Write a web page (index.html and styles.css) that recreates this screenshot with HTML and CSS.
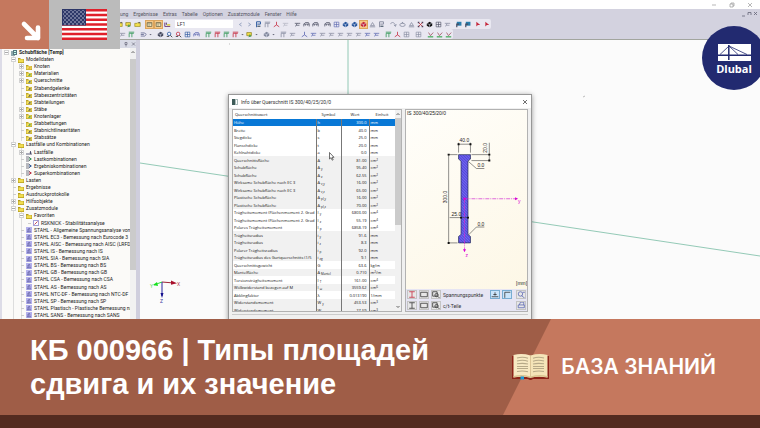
FILE: index.html
```html
<!DOCTYPE html>
<html lang="ru">
<head>
<meta charset="utf-8">
<meta name="viewport" content="width=device-width, initial-scale=1">
<title>КБ 000966 | Типы площадей сдвига и их значение</title>
<link rel="stylesheet" href="styles.css">
</head>
<body>
<svg class="defs" aria-hidden="true">
  <symbol id="folder" viewBox="0 0 6 6"><path d="M0 1h2l1 1h3v4H0z" fill="#b39b1e"/><path d="M.5 2.3h5v3h-5z" fill="#f1dc4f"/></symbol>
  <symbol id="item" viewBox="0 0 6 6"><path d="M0 1h2l1 1h3v4H0z" fill="#bda52a"/><path d="M.5 2.3h5v3h-5z" fill="#f3df5c"/><path d="M2 5l2-2.4.8 1.6z" fill="currentColor"/></symbol>
  <symbol id="combo" viewBox="0 0 6 6"><path d="M0 1h3l2 2-2 2H0M0 3h3" fill="none" stroke="#556" stroke-width=".8"/><path d="M3.500 1.500L6 3 3.500 4.500z" fill="currentColor"/></symbol>
  <symbol id="load" viewBox="0 0 6 6"><path d="M0 5h6M4.500 2v2.500" stroke="#335" stroke-width=".8"/><path d="M3.500 3.500h2l-1 1.500z" fill="#335"/></symbol>
  <symbol id="model" viewBox="0 0 6 6"><path d="M0 1h4v5H0z" fill="#8fa9ad"/><path d="M2 0h4v5H2z" fill="#55777e"/><path d="M3 1h2v1H3zM3 3h2v1H3z" fill="#cfe"/></symbol>
  <symbol id="steel" viewBox="0 0 6 6"><path d="M0 0h6v6H0z" fill="#b3b0ec"/><path d="M1 4.800h4M2 4.500V2l2-.5M2.500 3h2" stroke="#55539a" stroke-width=".7" fill="none"/></symbol>
  <symbol id="buckle" viewBox="0 0 6 6"><path d="M.4.4h5.200v5.200H.4z" fill="#fff" stroke="#7d78c9" stroke-width=".8"/><path d="M1.500 4.500l3-3" stroke="#c33a4a" stroke-width=".9"/></symbol>

  <symbol id="t-open" viewBox="0 0 9 9"><path d="M1 3h3l1-1h3v5H1z" fill="#f3e04d" stroke="#92821e" stroke-width=".8"/><path d="M5 3l2-2 1 2" fill="#557" /></symbol>
  <symbol id="t-screen" viewBox="0 0 9 9"><path d="M1 2h6v4H1z" fill="#f0dd49" stroke="#857717" stroke-width=".8"/><path d="M5 4l2 3-4 1z" fill="#4d9b52"/></symbol>
  <symbol id="t-table" viewBox="0 0 9 9"><path d="M1.500 2h6v5h-6z" fill="#f4e7bd" stroke="#6d6648"/><path d="M1.500 3.500h6M4 3.500V7" stroke="#6d6648" stroke-width=".6"/></symbol>
  <symbol id="t-load" viewBox="0 0 9 9"><path d="M1 2v5M1 7h7M3 2v2" stroke="#405" stroke-width=".9"/><path d="M4 4h4v2H4z" fill="#d9ca42"/><path d="M2 3.500h2L3 5z" fill="#335"/></symbol>
  <symbol id="t-prev" viewBox="0 0 9 9"><path d="M6 2.500L3 4.500l3 2" fill="none" stroke="#8493b4"/></symbol>
  <symbol id="t-next" viewBox="0 0 9 9"><path d="M3 2.500l3 2-3 2" fill="none" stroke="#8493b4"/></symbol>
  <symbol id="t-flag" viewBox="0 0 9 9"><path d="M2 8V1h5v3H3" fill="none" stroke="currentColor" stroke-width="1.200"/><path d="M3 6h4v1.500H3z" fill="#456"/></symbol>
  <symbol id="t-beam" viewBox="0 0 9 9"><path d="M1 7V4h7v3M1 4l2-2h4l1 2M3 4v2M6 4v2" fill="none" stroke="currentColor" stroke-width=".9"/></symbol>
  <symbol id="t-frame" viewBox="0 0 9 9"><path d="M1.500 8V3h6M5 3v5M1 1.500h7" fill="none" stroke="currentColor"/></symbol>
  <symbol id="t-cube" viewBox="0 0 9 9"><path d="M1 3.500L4.500 1 8 3v3L4.500 8 1 6z" fill="currentColor"/><path d="M1.500 3.500l3 1 3-1.500M4.500 4.500V8" stroke="#dfe5f5" stroke-width=".7" fill="none"/></symbol>
  <symbol id="t-zoom" viewBox="0 0 9 9"><circle cx="4" cy="3.700" r="2.200" fill="#e9efff" stroke="currentColor"/><path d="M5.500 5.500L8 8M1 7h3" stroke="#444" stroke-width="1.200"/></symbol>
  <symbol id="t-cross" viewBox="0 0 9 9"><path d="M2 2l5 5M7 2L2 7" stroke="#c52c34"/><path d="M1 1h2v2H1zM6 1h2v2H6zM1 6h2v2H1zM6 6h2v2H6z" fill="#514058"/></symbol>
  <symbol id="t-turn" viewBox="0 0 9 9"><path d="M1 4c0-3 5-3 6 2M5 5l2 2 1-3" fill="none" stroke="currentColor"/></symbol>
  <symbol id="t-loop" viewBox="0 0 9 9"><ellipse cx="4.500" cy="5" rx="3.500" ry="2" fill="none" stroke="currentColor"/><path d="M3 3l1.500-2L6 3z" fill="currentColor"/></symbol>
  <symbol id="t-support" viewBox="0 0 9 9"><path d="M4.500 2L7 6H2zM1 7.500h7" fill="none" stroke="currentColor"/></symbol>
  <symbol id="t-axis" viewBox="0 0 9 9"><path d="M4.500 1v4L1 7.500M4.500 5L8 7.500" fill="none" stroke="currentColor"/></symbol>
  <symbol id="t-dim" viewBox="0 0 9 9"><path d="M1 3h7M3 5.500h4M2 7l2-4" fill="none" stroke="currentColor" stroke-width=".9"/></symbol>
  <symbol id="t-arrow" viewBox="0 0 9 9"><path d="M3 1v6l2-2h3z" fill="currentColor"/></symbol>
  <symbol id="t-diagram" viewBox="0 0 9 9"><path d="M1 7.500h7" stroke="#38a850" stroke-width="1.500"/><path d="M2 2l2.500 4L8 2" fill="none" stroke="#a05060"/></symbol>
  <symbol id="t-grid" viewBox="0 0 9 9"><path d="M1.500 1.500h6v6h-6zM1.500 4.500h6M4.500 1.500v6" fill="none" stroke="currentColor" stroke-width=".8"/></symbol>
  <symbol id="t-member" viewBox="0 0 9 9"><path d="M1 2.500h5L8 4.500 6 6.500H1M1 4.500h4" fill="none" stroke="#5c608b"/></symbol>
  <symbol id="t-mark" viewBox="0 0 9 9"><path d="M1 1h6v5H1z" fill="#297dac"/><path d="M1 8V4h3" fill="none" stroke="currentColor" stroke-width="1.500"/></symbol>
  <symbol id="t-down" viewBox="0 0 5 9"><path d="M1 4h3L2.500 5.500z" fill="#667"/></symbol>
</svg>

<main class="app">
  <div class="titlebar">
    <button aria-label="Minimieren"><svg viewBox="0 0 6 6"><path d="M1 3h4"/></svg></button>
    <button aria-label="Verkleinern"><svg viewBox="0 0 6 6"><path d="M1 2h3v3H1zM2 2V1h3v3H4"/></svg></button>
    <button aria-label="Schließen"><svg viewBox="0 0 6 6"><path d="M1 1l4 4M5 1L1 5"/></svg></button>
  </div>
  <header class="ribbon">
    <nav class="menu">
      <a href="#">ung</a><a href="#">Ergebnisse</a><a href="#">Extras</a><a href="#">Tabelle</a><a href="#">Optionen</a><a href="#">Zusatzmodule</a><a href="#">Fenster</a><a href="#">Hilfe</a>
      <span class="mdi"><svg viewBox="0 0 18 6"><path d="M2 5h3M8 4V1.500h3V4M14 1l3 3M17 1l-3 3"/></svg></span>
    </nav>
    <div class="toolbar first">
      <div class="group"><button aria-label="Öffnen"><svg><use href="#t-open"/></svg></button><button aria-label="Ansicht"><svg><use href="#t-screen"/></svg></button><button aria-label="Ordner"><svg><use href="#t-open"/></svg></button></div>
      <div class="group"><button class="on" aria-label="Navigator"><svg><use href="#t-table"/></svg></button><button class="on" aria-label="Tabelle"><svg><use href="#t-table"/></svg></button><button aria-label="Lastfall"><svg><use href="#t-load"/></svg></button></div>
      <select aria-label="Lastfall wählen"><option>LF1</option></select>
      <div class="group"><button aria-label="Zurück"><svg><use href="#t-prev"/></svg></button><button aria-label="Weiter"><svg><use href="#t-next"/></svg></button><button class="blue" aria-label="Lasten"><svg><use href="#t-flag"/></svg></button><button class="gray" aria-label="Werte"><svg><use href="#t-frame"/></svg></button><button class="red" aria-label="Ergebnis"><svg><use href="#t-axis"/></svg></button><button class="pale" aria-label="Maße"><svg><use href="#t-dim"/></svg></button></div>
      <div class="group"><button class="dark" aria-label="Rechnen"><svg><use href="#t-dim"/></svg></button><button class="dark" aria-label="Träger"><svg><use href="#t-beam"/></svg></button><button class="dark" aria-label="Stab"><svg><use href="#t-beam"/></svg></button></div>
      <div class="group"><button class="dark" aria-label="Drucken"><svg><use href="#t-beam"/></svg></button><button class="violet" aria-label="Raster"><svg><use href="#t-grid"/></svg></button><button class="blue" aria-label="Körper"><svg><use href="#t-cube"/></svg></button><button class="blue" aria-label="Fläche"><svg><use href="#t-cube"/></svg></button><button class="red on" aria-label="Rendern"><svg><use href="#t-cube"/></svg></button><button class="gray" aria-label="Lager"><svg><use href="#t-support"/></svg></button><button class="gray" aria-label="Fahne"><svg><use href="#t-flag"/></svg></button></div>
      <div class="group"><button class="gray" aria-label="Drehen"><svg><use href="#t-turn"/></svg></button><button class="gray" aria-label="Rotieren"><svg><use href="#t-loop"/></svg></button><button class="gray" aria-label="Spiegeln"><svg><use href="#t-support"/></svg></button><button aria-label="Löschen"><svg><use href="#t-cross"/></svg></button><button class="black" aria-label="Info"><svg><use href="#t-cube"/></svg></button><button class="dark" aria-label="Auswahl"><svg><use href="#t-grid"/></svg></button><button class="gray" aria-label="Filter"><svg><use href="#t-dim"/></svg></button></div>
      <div class="group"><button class="dark" aria-label="Fenster"><svg><use href="#t-mark"/></svg></button><button class="dark" aria-label="Bild"><svg><use href="#t-mark"/></svg></button><button class="red" aria-label="Markieren"><svg><use href="#t-arrow"/></svg></button><button class="red" aria-label="Pfeil"><svg><use href="#t-arrow"/></svg></button></div>
    </div>
    <div class="toolbar second">
      <div class="group"><button class="gray" aria-label="Linie"><svg><use href="#t-dim"/></svg></button><button class="green" aria-label="Knoten"><svg><use href="#t-frame"/></svg></button></div>
      <div class="group"><button aria-label="Stabtyp"><svg><use href="#t-member"/></svg></button><button class="drop" aria-label="Mehr Stäbe"><svg><use href="#t-down"/></svg></button></div>
      <div class="group"><button class="dark" aria-label="Auswahl"><svg><use href="#t-cube"/></svg></button><button class="blue" aria-label="Vergrößern"><svg><use href="#t-zoom"/></svg></button><button class="red" aria-label="Verkleinern"><svg><use href="#t-zoom"/></svg></button><button class="blue" aria-label="Alles"><svg><use href="#t-grid"/></svg></button><button class="violet" aria-label="Verschieben"><svg><use href="#t-beam"/></svg></button></div>
      <div class="group"><button class="green" aria-label="Ansicht X"><svg><use href="#t-frame"/></svg></button><button class="red" aria-label="Ansicht Y"><svg><use href="#t-frame"/></svg></button><button class="green" aria-label="Ansicht Z"><svg><use href="#t-frame"/></svg></button><button class="red" aria-label="Isometrie"><svg><use href="#t-frame"/></svg></button><button class="drop" aria-label="Mehr Ansichten"><svg><use href="#t-down"/></svg></button><button aria-label="Sicht"><svg><use href="#t-screen"/></svg></button><button class="drop" aria-label="Mehr Sichten"><svg><use href="#t-down"/></svg></button></div>
      <div class="group"><button class="gray" aria-label="Modell"><svg><use href="#t-cube"/></svg></button><button class="drop" aria-label="Mehr Modelle"><svg><use href="#t-down"/></svg></button></div>
      <div class="group"><button class="gray" aria-label="Last"><svg><use href="#t-frame"/></svg></button><button class="gray" aria-label="Maß"><svg><use href="#t-dim"/></svg></button></div>
      <div class="group"><button class="violet" aria-label="Achse"><svg><use href="#t-axis"/></svg></button><button class="violet" aria-label="N"><svg><use href="#t-dim"/></svg></button><button class="gray" aria-label="Vy"><svg><use href="#t-dim"/></svg></button><button class="gray" aria-label="Vz"><svg><use href="#t-dim"/></svg></button><button class="gray" aria-label="MT"><svg><use href="#t-dim"/></svg></button><button class="gray" aria-label="My"><svg><use href="#t-dim"/></svg></button><button class="gray" aria-label="Mz"><svg><use href="#t-dim"/></svg></button><button class="violet" aria-label="px"><svg><use href="#t-dim"/></svg></button><button class="violet" aria-label="py"><svg><use href="#t-dim"/></svg></button></div>
      <div class="group"><button class="green" aria-label="Schnitt"><svg><use href="#t-frame"/></svg></button><button class="red" aria-label="Koordinaten"><svg><use href="#t-axis"/></svg></button><button class="gray" aria-label="Gitter"><svg><use href="#t-grid"/></svg></button></div>
      <div class="group"><button class="gray" aria-label="Seite"><svg><use href="#t-grid"/></svg></button></div>
      <div class="group"><button aria-label="Diagramm 1"><svg><use href="#t-diagram"/></svg></button><button aria-label="Diagramm 2"><svg><use href="#t-diagram"/></svg></button><button aria-label="Diagramm 3"><svg><use href="#t-diagram"/></svg></button></div>
    </div>
  </header>

  <div class="work">
    <aside class="navigator">
      <div class="nav-head"><svg viewBox="0 0 12 6"><path d="M1 1.500h2v2H1zM2 3.500v2M8 1.500l3 3M11 1.500l-3 3"/></svg></div>
      <div class="nav-body">
        <ul class="tree">
          <li class="l0"><i class="box"></i><svg><use href="#model"/></svg><b>Schubfläche [Temp]</b></li>
          <li class="l1"><i class="box"></i><svg><use href="#folder"/></svg>Modelldaten</li>
          <li class="l2"><i class="box plus"></i><svg class="orange"><use href="#item"/></svg>Knoten</li>
          <li class="l2"><i class="box plus"></i><svg class="green"><use href="#item"/></svg>Materialien</li>
          <li class="l2"><i class="box plus"></i><svg class="blue"><use href="#item"/></svg>Querschnitte</li>
          <li class="l2"><i class="leaf"></i><svg class="dark"><use href="#item"/></svg>Stabendgelenke</li>
          <li class="l2"><i class="leaf"></i><svg class="dark"><use href="#item"/></svg>Stabexzentrizitäten</li>
          <li class="l2"><i class="leaf"></i><svg class="dark"><use href="#item"/></svg>Stabteilungen</li>
          <li class="l2"><i class="box plus"></i><svg class="dark"><use href="#item"/></svg>Stäbe</li>
          <li class="l2"><i class="box plus"></i><svg class="green"><use href="#item"/></svg>Knotenlager</li>
          <li class="l2"><i class="leaf"></i><svg class="green"><use href="#item"/></svg>Stabbettungen</li>
          <li class="l2"><i class="leaf"></i><svg class="dark"><use href="#item"/></svg>Stabnichtlinearitäten</li>
          <li class="l2"><i class="leaf"></i><svg class="dark"><use href="#item"/></svg>Stabsätze</li>
          <li class="l1"><i class="box"></i><svg><use href="#folder"/></svg>Lastfälle und Kombinationen</li>
          <li class="l2"><i class="box plus"></i><svg><use href="#load"/></svg>Lastfälle</li>
          <li class="l2"><i class="leaf"></i><svg class="green"><use href="#combo"/></svg>Lastkombinationen</li>
          <li class="l2"><i class="leaf"></i><svg class="blue"><use href="#combo"/></svg>Ergebniskombinationen</li>
          <li class="l2"><i class="leaf"></i><svg class="red"><use href="#combo"/></svg>Superkombinationen</li>
          <li class="l1"><i class="box plus"></i><svg><use href="#folder"/></svg>Lasten</li>
          <li class="l1"><i class="leaf"></i><svg><use href="#folder"/></svg>Ergebnisse</li>
          <li class="l1"><i class="leaf"></i><svg><use href="#folder"/></svg>Ausdruckprotokolle</li>
          <li class="l1"><i class="box plus"></i><svg><use href="#folder"/></svg>Hilfsobjekte</li>
          <li class="l1"><i class="box"></i><svg><use href="#folder"/></svg>Zusatzmodule</li>
          <li class="l2"><i class="box"></i><svg><use href="#folder"/></svg>Favoriten</li>
          <li class="l3"><i class="leaf"></i><svg><use href="#buckle"/></svg>RSKNICK - Stabilitätsanalyse</li>
          <li class="l2"><i class="leaf"></i><svg><use href="#steel"/></svg>STAHL - Allgemeine Spannungsanalyse von St</li>
          <li class="l2"><i class="leaf"></i><svg><use href="#steel"/></svg>STAHL EC3 - Bemessung nach Eurocode 3</li>
          <li class="l2"><i class="leaf"></i><svg><use href="#steel"/></svg>STAHL AISC - Bemessung nach AISC (LRFD od</li>
          <li class="l2"><i class="leaf"></i><svg><use href="#steel"/></svg>STAHL IS - Bemessung nach IS</li>
          <li class="l2"><i class="leaf"></i><svg><use href="#steel"/></svg>STAHL SIA - Bemessung nach SIA</li>
          <li class="l2"><i class="leaf"></i><svg><use href="#steel"/></svg>STAHL BS - Bemessung nach BS</li>
          <li class="l2"><i class="leaf"></i><svg><use href="#steel"/></svg>STAHL GB - Bemessung nach GB</li>
          <li class="l2"><i class="leaf"></i><svg><use href="#steel"/></svg>STAHL CSA - Bemessung nach CSA</li>
          <li class="l2"><i class="leaf"></i><svg><use href="#steel"/></svg>STAHL AS - Bemessung nach AS</li>
          <li class="l2"><i class="leaf"></i><svg><use href="#steel"/></svg>STAHL NTC-DF - Bemessung nach NTC-DF</li>
          <li class="l2"><i class="leaf"></i><svg><use href="#steel"/></svg>STAHL SP - Bemessung nach SP</li>
          <li class="l2"><i class="leaf"></i><svg><use href="#steel"/></svg>STAHL Plastisch - Plastische Bemessung nach</li>
          <li class="l2"><i class="leaf"></i><svg><use href="#steel"/></svg>STAHL SANS - Bemessung nach SANS</li>
        </ul>
        <div class="scroll"><svg viewBox="0 0 6 6"><path d="M1.500 4L3 2.500 4.500 4"/></svg><span class="thumb"></span></div>
      </div>
    </aside>

    <section class="view">
      <svg class="scene" viewBox="0 0 620 279" preserveAspectRatio="xMinYMin slice" aria-hidden="true">
        <path d="M208 0v60M0 123L620 216" fill="none" stroke="#79bca5" stroke-width=".8"/>
        <path d="M89 4h1M443 57l2-1" stroke="#bbb"/>
        <path d="M22 242l-8 3" stroke="#2bea35"/><path d="M17 242l-4 3 5 1z" fill="#15e01f"/>
        <path d="M22 242l12 1" stroke="#9c2538"/><path d="M31 240.500l6 2.800-6 1.500z" fill="#a80e2b"/>
        <path d="M22 242v14" stroke="#2726a0"/><path d="M20.500 253h3l-1.500 5z" fill="#14108e"/>
        <text x="37" y="246" fill="#b33c58">X</text><text x="10" y="248" fill="#57d65d">Y</text><text x="20" y="263" fill="#4a47a5">Z</text>
      </svg>

      <div class="dialog" role="dialog" aria-labelledby="dlg-title">
        <div class="dlg-title">
          <svg class="app-icon" viewBox="0 0 6 6"><path d="M0 0h6v6H0z" fill="#a9bbb9"/><path d="M0 0h3v6H0z" fill="#3f5c59"/><path d="M4 1h1v4H4z" fill="#fff"/></svg>
          <span id="dlg-title">Info über Querschnitt IS 300/40/25/20/0</span>
          <button aria-label="Schließen"><svg viewBox="0 0 6 6"><path d="M1 1l4 4M5 1L1 5"/></svg></button>
        </div>
        <div class="dlg-body">
          <div class="values">
            <div class="clip">
            <table>
              <thead><tr><th>Querschnittswert</th><th>Symbol</th><th>Wert</th><th>Einheit</th></tr></thead>
              <tbody>
                <tr class="sel"><td>Höhe</td><td>h</td><td>300.0</td><td>mm</td></tr>
                <tr><td>Breite</td><td>b</td><td>40.0</td><td>mm</td></tr>
                <tr><td>Stegdicke</td><td>s</td><td>25.0</td><td>mm</td></tr>
                <tr><td>Flanschdicke</td><td>t</td><td>20.0</td><td>mm</td></tr>
                <tr><td>Kehlnahtdicke</td><td>a</td><td>0.0</td><td>mm</td></tr>
                <tr class="alt"><td>Querschnittsfläche</td><td>A</td><td>81.00</td><td>cm<sup>2</sup></td></tr>
                <tr class="alt"><td>Schubfläche</td><td>A <sub>y</sub></td><td>95.40</td><td>cm<sup>2</sup></td></tr>
                <tr class="alt"><td>Schubfläche</td><td>A <sub>z</sub></td><td>62.55</td><td>cm<sup>2</sup></td></tr>
                <tr class="alt"><td>Wirksame Schubfläche nach EC 3</td><td>A <sub>v,y</sub></td><td>16.00</td><td>cm<sup>2</sup></td></tr>
                <tr class="alt"><td>Wirksame Schubfläche nach EC 3</td><td>A <sub>v,z</sub></td><td>65.00</td><td>cm<sup>2</sup></td></tr>
                <tr class="alt"><td>Plastische Schubfläche</td><td>A <sub>pl,y</sub></td><td>16.00</td><td>cm<sup>2</sup></td></tr>
                <tr class="alt"><td>Plastische Schubfläche</td><td>A <sub>pl,z</sub></td><td>70.00</td><td>cm<sup>2</sup></td></tr>
                <tr><td>Trägheitsmoment (Flächenmoment 2. Grad</td><td>I <sub>y</sub></td><td>6803.00</td><td>cm<sup>4</sup></td></tr>
                <tr><td>Trägheitsmoment (Flächenmoment 2. Grad</td><td>I <sub>z</sub></td><td>55.19</td><td>cm<sup>4</sup></td></tr>
                <tr><td>Polares Trägheitsmoment</td><td>I <sub>p</sub></td><td>6858.19</td><td>cm<sup>4</sup></td></tr>
                <tr class="alt"><td>Trägheitsradius</td><td>i <sub>y</sub></td><td>91.6</td><td>mm</td></tr>
                <tr class="alt"><td>Trägheitsradius</td><td>i <sub>z</sub></td><td>8.3</td><td>mm</td></tr>
                <tr class="alt"><td>Polarer Trägheitsradius</td><td>i <sub>p</sub></td><td>92.0</td><td>mm</td></tr>
                <tr class="alt"><td>Trägheitsradius des Gurtquerschnitts (1/5</td><td>i <sub>zg</sub></td><td>9.1</td><td>mm</td></tr>
                <tr><td>Querschnittsgewicht</td><td>G</td><td>63.6</td><td>kg/m</td></tr>
                <tr class="alt"><td>Mantelfläche</td><td>A <sub>Mantel</sub></td><td>0.710</td><td>m<sup>2</sup>/m</td></tr>
                <tr><td>Torsionsträgheitsmoment</td><td>I <sub>T</sub></td><td>161.00</td><td>cm<sup>4</sup></td></tr>
                <tr class="alt"><td>Wölbwiderstand bezogen auf M</td><td>I <sub>ω</sub></td><td>3559.62</td><td>cm<sup>6</sup></td></tr>
                <tr><td>Abklingfaktor</td><td>λ</td><td>0.013190</td><td>1/mm</td></tr>
                <tr class="alt"><td>Widerstandsmoment</td><td>W <sub>y</sub></td><td>453.53</td><td>cm<sup>3</sup></td></tr>
                <tr class="alt"><td>Widerstandsmoment</td><td>W <sub>z</sub></td><td>27.59</td><td>cm<sup>3</sup></td></tr>
              </tbody>
            </table>
            </div>
            <div class="scroll"><svg viewBox="0 0 6 6"><path d="M1.500 4L3 2.500 4.500 4"/></svg><span class="thumb"></span><svg viewBox="0 0 6 6"><path d="M1.500 2L3 3.500 4.500 2"/></svg></div>
          </div>
          <div class="section">
            <div class="sketch">
              <svg viewBox="0 0 122 178" role="img" aria-label="IS 300/40/25/20/0">
                <defs><pattern id="hatch" width="2" height="2" patternUnits="userSpaceOnUse" patternTransform="rotate(-45)"><path d="M0 0h2v2H0z" fill="#7468f2"/><path d="M0 0v2" stroke="#3a30c4" stroke-width="1.200"/></pattern></defs>
                <text x="1" y="5">IS 300/40/25/20/0</text>
                <path d="M53 45h12v4.500l-2.500 2v74l2.500 2v6.500H53v-6.500l2.500-2v-74l-2.500-2z" fill="url(#hatch)" stroke="#222a55" stroke-width=".7"/>
                <path d="M53 43V33M65 43V33M53 34.500h12M43 45h9M43 134h9M43 45v89M44 108.500h19M66 45h18M66 51h18M84 33v18M63 52l8 7h8M63 126l8-8h8" fill="none" stroke="#444" stroke-width=".6"/>
                <path d="M52 33.500h2v2h-2zM64 33.500h2v2h-2zM42 44h2v2h-2zM42 133h2v2h-2zM83 44h2v2h-2zM83 50h2v2h-2zM54.500 107.700h2v1.600h-2zM61.500 107.700h2v1.600h-2z" fill="#111"/>
                <path d="M59 89.500h52M59 89.500v52" stroke="#d22bd0" stroke-width=".7" stroke-dasharray="4 1 1 1" fill="none"/>
                <path d="M110 88l3 1.500-3 1.500zM57.500 140.500h3l-1.500 3z" fill="#d800d4"/><circle cx="59" cy="89.500" r="1.300" fill="#d800d4"/>
                <text x="54" y="32.500">40.0</text><text x="46" y="107">25.0</text><text x="72" y="57.500">0.0</text><text x="72" y="116.500">0.0</text>
                <text transform="translate(41 94) rotate(-90)">300.0</text><text transform="translate(82 43) rotate(-90)">20.0</text>
                <text class="axis" x="113" y="94">y</text><text class="axis" x="60" y="148">z</text><text x="111" y="176">[mm]</text>
              </svg>
            </div>
            <div class="options">
              <button aria-label="I-Profil" class="red"><svg viewBox="0 0 9 8"><path d="M2 1.500h5M2 6.500h5M4.500 1.500v5" /></svg></button>
              <button aria-label="Rechteck"><svg viewBox="0 0 9 8"><path d="M1.500 2h6v4h-6z"/></svg></button>
              <button aria-label="Details"><svg viewBox="0 0 9 8"><path d="M1.500 1.500h4v4h-4z"/><circle cx="5" cy="4.500" r="1.500"/><path d="M6 5.500l2 2"/></svg></button>
              <span>Spannungspunkte</span>
              <button aria-label="Bemaßung" class="active"><svg viewBox="0 0 9 8"><path d="M1.500 6h6M4.500 2v3M3 4h3"/></svg></button>
              <button aria-label="Achsen" class="active"><svg viewBox="0 0 9 8"><path d="M2.500 7V2h5"/></svg></button>
              <button aria-label="Zoom" class="violet last"><svg viewBox="0 0 9 8"><circle cx="4" cy="3.500" r="2"/><path d="M5 5l3 2.500M6 2h2"/></svg></button>
            </div>
            <div class="options">
              <button aria-label="c/t-Profil"><svg viewBox="0 0 9 8"><path d="M2 1.500h5M2 6.500h5M4.500 1.500v5"/></svg></button>
              <button aria-label="c/t-Rechteck"><svg viewBox="0 0 9 8"><path d="M1.500 2h6v4h-6z"/></svg></button>
              <button aria-label="c/t-Details"><svg viewBox="0 0 9 8"><path d="M1.500 1.500h4v4h-4z"/><circle cx="5" cy="4.500" r="1.500"/><path d="M6 5.500l2 2"/></svg></button>
              <span>c/t-Teile</span>
              <button aria-label="Drucken" class="violet last"><svg viewBox="0 0 9 8"><path d="M2 3.500h5.500V6H2zM3 3.500L4 1h3v2.500"/></svg></button>
            </div>
          </div>
        </div>
        <div class="dlg-foot"></div>
      </div>
      <svg class="pointer" viewBox="0 0 6 9" aria-hidden="true"><path d="M.5.500v6.500l1.500-1.300 1.200 2.500 1-.5L3 5.300h2z" fill="#fff" stroke="#333" stroke-width=".7"/></svg>
    </section>
  </div>

  <div class="badges">
    <div class="arrow"><svg viewBox="0 0 49 49"><path d="M24 24l14 14M38 27.500v10.500h-11" fill="none" stroke="#fff" stroke-width="4.600" stroke-linecap="round" stroke-linejoin="round"/></svg></div>
    <div class="lang">
      <svg viewBox="0 0 45 31" role="img" aria-label="USA">
        <defs><pattern id="stars" width="4" height="4" patternUnits="userSpaceOnUse"><circle cx="1" cy="1" r=".7" fill="#dfe3f1"/><circle cx="3" cy="3" r=".7" fill="#dfe3f1"/></pattern></defs>
        <path d="M0 0h45v31H0z" fill="#fff"/>
        <path d="M0 1.200h45M0 6h45M0 10.700h45M0 15.500h45M0 20.200h45M0 25h45M0 29.800h45" stroke="#e0202b" stroke-width="2.400"/>
        <path d="M0 0h24v16.500H0z" fill="#2d3768"/><path d="M1 1h22v15H1z" fill="url(#stars)"/>
      </svg>
    </div>
  </div>

  <div class="logo">
    <svg viewBox="0 0 33 17" aria-hidden="true"><path d="M0 0h33v17H0z" fill="#fff"/><path d="M2 10.500l9-8.500 9 8.500M11 2l18 8.500" fill="none" stroke="#222a70" stroke-width=".8"/><path d="M0 11.200h33M10.800 1v15" stroke="#222a70" stroke-width="1.500"/></svg>
    <span>Dlubal</span>
  </div>
</main>

<footer class="banner">
  <h1>КБ 000966 | Типы площадей сдвига и их значение</h1>
  <div class="category">
    <svg viewBox="0 0 37 27" aria-hidden="true">
      <path d="M0 2h37v23H21q-2.500 2-5 0H0z" fill="#8c2318"/>
      <path d="M1.500 1Q10-1 18.500 1.500V23.500Q10 22 1.500 23.500z" fill="#f8e9c3"/><path d="M35.500 1Q27-1 18.500 1.500V23.500Q27 22 35.500 23.500z" fill="#f5e4b8"/>
      <path d="M1.500 23.500Q10 21.500 18.500 24 27 21.500 35.500 23.500V22Q27 20 18.500 22.500 10 20 1.500 22z" fill="#d8c28e"/>
      <path d="M18.500 1.500v22" stroke="#dcc998" stroke-width=".8"/>
      <path d="M5 4q6-1.500 11 .3M5 7q6-1.500 11 .3M5 9.800q6-1 11 .2M5 12.500h11M5 14.500h11M5 17.500q6-1 11 .3M21 4.300q5-1.800 11-.3M21 7.300q5-1.800 11-.3M21 10q5-1.200 11-.2M21 12.500h11M21 14.500h11M21 17.800q5-1.300 11-.3" fill="none" stroke="#b7a988" stroke-width="1.100"/>
      <path d="M8.500 22.500h3.500v3.500l-1.800-1-1.700 1z" fill="#199bd7"/>
    </svg>
    <span>БАЗА ЗНАНИЙ</span>
  </div>
</footer>
<div class="base"></div>
</body>
</html>
```
FILE: styles.css
```css
* { box-sizing: border-box; }

body {
  margin: 0;
  height: 100vh;
  display: flex;
  flex-direction: column;
  overflow: hidden;
  background: #fff;
  font-family: Roboto, "Open Sans", sans-serif;
  font-size: 5px;
  color: #333;
}

button {
  padding: 0;
  border: 0;
  background: none;
  color: inherit;
  font: inherit;
}

svg { display: block; flex: none; }
a { color: inherit; text-decoration: none; }
.defs { position: absolute; width: 0; height: 0; }

.blue { color: #28569c; }
.red { color: #c5283c; }
.green { color: #2d9653; }
.orange { color: #e39a31; }
.dark { color: #474a5e; }
.black { color: #111; }
.gray { color: #858a9e; }
.pale { color: #b1b4c2; }
.violet { color: #5965b0; }

/* Application window */
.app {
  position: relative;
  flex: 1;
  min-height: 0;
  display: flex;
  flex-direction: column;
  overflow: hidden;
}

.titlebar {
  height: 9px;
  flex: none;
  display: flex;
  justify-content: flex-end;
  align-items: center;
  gap: 12px;
  padding-right: 7px;
}

.titlebar svg, .dlg-title button svg { width: 6px; height: 6px; fill: none; stroke: #999; stroke-width: .7; }

.ribbon {
  flex: none;
  height: 31px;
  background: #d3d2df;
  border-bottom: 1px solid #a2a59e;
}

.menu {
  display: flex;
  align-items: center;
  gap: 5px;
  height: 10px;
  padding: 0 2px 0 120px;
  color: #55555f;
}

.mdi { margin-left: auto; }
.mdi svg { width: 18px; height: 6px; fill: none; stroke: #667; stroke-width: .8; }

.toolbar {
  display: flex;
  align-items: center;
  gap: 3px;
  width: fit-content;
  height: 10px;
  background: #e9e8f1;
  border-radius: 0 2px 2px 0;
}

.first { padding-left: 115px; }
.second { padding-left: 118px; }
.group { display: flex; }
.toolbar button { width: 9px; height: 9px; padding: 1px; }
.toolbar svg { width: 7px; height: 7px; }
.toolbar .drop { width: 5px; padding: 1px 0; }
.toolbar .drop svg { width: 5px; }
.toolbar .on { background: #f8c987; outline: 1px solid #dca55e; outline-offset: -1px; }

.toolbar select {
  appearance: none;
  width: 58px;
  height: 8px;
  padding: 0 2px;
  border: 0;
  background: #fff;
  color: #333;
  font: inherit;
  line-height: 8px;
}

.work { flex: 1; min-height: 0; display: flex; }

/* Project navigator */
.navigator {
  width: 140px;
  flex: none;
  display: flex;
  flex-direction: column;
  background: #fbfaf8;
  border-left: 2px solid #dddce7;
  border-right: 4px solid #cfcedd;
}

.nav-head {
  height: 8px;
  flex: none;
  display: flex;
  justify-content: flex-end;
  align-items: center;
  background: #d9dbe6;
}

.nav-head svg { width: 12px; height: 6px; fill: none; stroke: #667; stroke-width: .7; }
.nav-body { flex: 1; min-height: 0; display: flex; }

.tree {
  flex: 1;
  min-width: 0;
  display: grid;
  grid-auto-rows: 1fr;
  margin: 0;
  padding: 1px 0 0;
  list-style: none;
  color: #1c1c1c;
}

.tree li {
  display: flex;
  align-items: center;
  gap: 2px;
  min-height: 0;
  overflow: hidden;
  line-height: 7px;
  white-space: nowrap;
  background-repeat: no-repeat;
  background-size: 1px 100%;
}

.tree svg { width: 6px; height: 6px; }
.l0 { padding-left: 2px; }
.l1 { padding-left: 9px; background-image: linear-gradient(#ddd, #ddd); background-position: 11px 0; }
.l2, .l3 { background-image: linear-gradient(#ddd, #ddd), linear-gradient(#ddd, #ddd); background-position: 11px 0, 19px 0; }
.l2 { padding-left: 17px; }
.l3 { padding-left: 24px; }

.box, .leaf { width: 5px; flex: none; }

.box {
  height: 5px;
  border: 1px solid #d3d3d3;
  background: linear-gradient(#aaa, #aaa) center / 3px 1px no-repeat #fff;
}

.box.plus { background: linear-gradient(#aaa, #aaa) center / 3px 1px no-repeat, linear-gradient(#aaa, #aaa) center / 1px 3px no-repeat #fff; }
.leaf { height: 1px; background: linear-gradient(#ccc, #ccc) right / 3px 1px no-repeat; }

.scroll {
  width: 6px;
  flex: none;
  display: flex;
  flex-direction: column;
  background: #f1f1f1;
}

.scroll svg { width: 6px; height: 8px; fill: none; stroke: #444; stroke-width: .8; }
.thumb { background: #cbcbcb; }
.navigator .thumb { height: 78%; margin-top: 3px; }

/* Model view */
.view {
  position: relative;
  flex: 1;
  min-width: 0;
  background: #fbfbfb;
}

.scene { width: 100%; height: 100%; font-size: 5px; }

.dialog {
  position: absolute;
  left: 88px;
  top: 54px;
  width: 304px;
  display: flex;
  flex-direction: column;
  background: #f0f0f0;
  border: 1px solid #979797;
  box-shadow: 0 1px 5px #0006;
}

.dlg-title {
  height: 13px;
  display: flex;
  align-items: center;
  gap: 3px;
  padding: 0 3px;
  background: #fff;
}

.dlg-title button { margin-left: auto; }
.dlg-title button svg { stroke: #333; }
.app-icon { width: 6px; height: 6px; }

.dlg-body { display: flex; gap: 3px; padding: 1px 3px 0; }

.values {
  width: 170px;
  height: 203px;
  display: flex;
  background: #fff;
  border: 1px solid #b2b2b2;
  color: #111;
}

.clip { flex: 1; min-width: 0; overflow: hidden; }
.values .thumb { flex: 1; margin-bottom: 78px; }

.values table {
  width: 100%;
  table-layout: fixed;
  border-collapse: collapse;
  white-space: nowrap;
  font-family: "Open Sans", sans-serif;
  font-size: 4px;
}

.values th { height: 9px; padding: 0; font-weight: 400; line-height: 8px; }
.values th:first-child { width: 83px; padding-left: 2px; text-align: left; }
.values th:nth-child(2) { width: 25px; }
.values th:nth-child(3) { width: 28px; }

.values td {
  height: 7px;
  padding: 0 1px;
  line-height: 7px;
  overflow: hidden;
  border-right: 1px solid #777;
}

.values tr:nth-child(even) td { height: 8px; }
.values td:last-child { border-right: 0; }
.values td:nth-child(3) { padding-right: 2px; text-align: right; }
.alt { background: #f1f1f1; }
.values .sel { background: #0878d6; color: #fff; }
sup, sub { font-size: 3px; line-height: 0; }
sup { vertical-align: 1px; }
sub { vertical-align: -1px; }

.section { flex: 1; display: flex; flex-direction: column; border: 1px solid #b2b2b2; }
.sketch { flex: 1; background: linear-gradient(150deg, #fffefa, #fdf7e6); }
.sketch svg { width: 100%; font-family: "Liberation Sans", Arial, sans-serif; font-size: 5px; }
.sketch text { fill: #222; }
.sketch .axis { fill: #d800d4; }

.options {
  height: 11px;
  display: flex;
  align-items: center;
  gap: 2px;
  padding: 0 1px;
  background: #e6e5f3;
}

.options span { flex: 1; }
.options button { width: 10px; height: 9px; outline: 1px solid #c4c4c4; outline-offset: -1px; background: #e7e7e7; }
.options svg { width: 10px; height: 9px; fill: none; stroke: currentColor; stroke-width: .7; }
.options .active { background: #cbe5fa; outline-color: #78add2; }
.options .last { margin-left: 2px; }
.dlg-foot { height: 20px; margin: 2px 3px; border-top: 1px solid #ccc; }

.pointer { position: absolute; left: 189px; top: 112px; width: 6px; height: 9px; }

/* Overlaid marks */
.badges { position: absolute; left: 0; top: 0; display: flex; }
.arrow { width: 49px; height: 49px; background: #c5785e; }
.lang { width: 71px; height: 49px; padding: 9px 13px; background: #bbb; }
.lang svg { width: 45px; height: 31px; }

.logo {
  position: absolute;
  right: -6px;
  top: 26px;
  width: 64px;
  height: 64px;
  display: flex;
  flex-direction: column;
  align-items: center;
  padding-top: 18px;
  border-radius: 50%;
  background: #222a70;
  color: #fff;
  font: 700 11px/15px "Open Sans", sans-serif;
}

.logo svg { width: 33px; height: 17px; }

/* Title banner */
.banner {
  position: relative;
  z-index: 0;
  flex: none;
  display: flex;
  align-items: center;
  justify-content: space-between;
  padding: 14px 44px 14px 30px;
  background: #c5785e;
  color: #fff;
}

.banner::before {
  content: "";
  position: absolute;
  z-index: -1;
  inset: 0 auto 0 0;
  width: 551px;
  background: #9f5d47;
  clip-path: polygon(0 0, 100% 0, calc(100% - 48px) 100%, 0 100%);
}

.banner h1 {
  max-width: 420px;
  margin: 0;
  font: 700 29px/34px "Liberation Sans", Arial, sans-serif;
}

.category {
  display: flex;
  align-items: center;
  gap: 12px;
  font: 600 21px/26px Inter, sans-serif;
  white-space: nowrap;
}

.category svg { width: 37px; height: 27px; }
.base { height: 13px; flex: none; background: #532b20; }
```
